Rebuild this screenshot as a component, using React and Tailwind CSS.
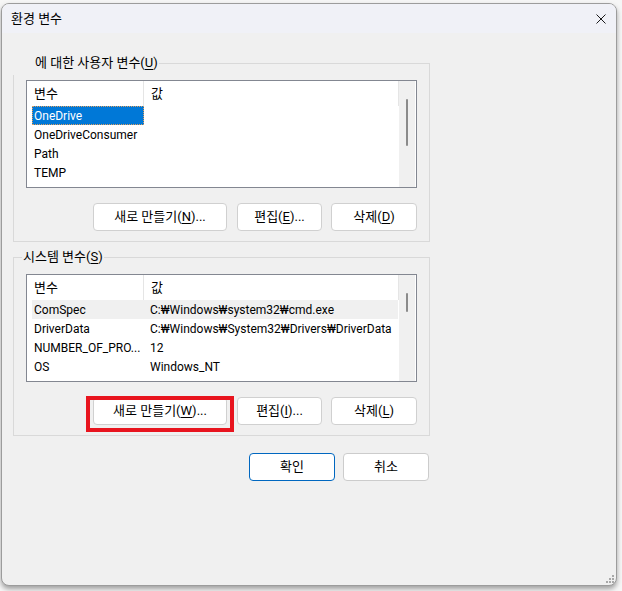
import React from 'react';

const font = "font-['Roboto','Noto_Sans_CJK_KR',sans-serif]";

const Key = ({ children }) => <span className="underline underline-offset-[2px] decoration-[1px]">{children}</span>;

const Button = ({ className = '', children }) => (
  <button type="button"
    className={`flex h-[28px] items-center justify-center rounded-[4px] border bg-white text-[13px] text-black ${className}`}>
    {children}
  </button>
);

const userRows = [
  { name: 'OneDrive', value: '', selected: true },
  { name: 'OneDriveConsumer', value: '' },
  { name: 'Path', value: '' },
  { name: 'TEMP', value: '' },
];

const systemRows = [
  { name: 'ComSpec', value: 'C:₩Windows₩system32₩cmd.exe', hover: true },
  { name: 'DriverData', value: 'C:₩Windows₩System32₩Drivers₩DriverData' },
  { name: 'NUMBER_OF_PRO...', value: '12' },
  { name: 'OS', value: 'Windows_NT' },
];

const VarList = ({ rows, thumb }) => (
  <div className="flex h-[108px] border border-[#838791] bg-white">
    <div className="w-[373px] overflow-hidden text-[12px]">
      {/* header */}
      <div className="flex h-[25px] w-[372px] text-[13px]">
        <div className="flex h-full w-[117px] items-center border-r border-[#e5e5e5] pl-[7px]">변수</div>
        <div className="flex h-full flex-1 items-center border-r border-[#e5e5e5] pl-[7px]">값</div>
      </div>
      {rows.map(row => (
        <div key={row.name}
          className={`ml-[5px] flex h-[19px] w-[366px] items-center whitespace-nowrap ${row.hover ? 'bg-[#f0f0f0]' : ''}`}>
          <div className={`flex h-full w-[112px] shrink-0 items-center overflow-hidden ${row.selected ? 'border border-dotted border-[#e0a060] bg-[#0078d7] pl-[1px] text-white' : 'pl-[2px]'}`}>
            {row.name}
          </div>
          <div className="pl-[6px]">{row.value}</div>
        </div>
      ))}
    </div>
    {/* scrollbar */}
    <div className="w-[16px] bg-[#f0f0f0] pt-[18px]">
      <div className={`ml-[7px] w-[2px] rounded-full bg-[#8b8b8b] ${thumb}`} />
    </div>
    <div className="w-[1px]" />
  </div>
);

export default function App() {
  return (
    <div className={`h-[591px] w-[622px] overflow-hidden bg-[#f6f6f6] pl-[1px] pt-[3px] text-[13px] text-black ${font}`}>
      <div className="relative flex h-[583px] w-[616px] flex-col overflow-hidden rounded-[8px] border border-[#9c9c9c] bg-[#f0f0f0] shadow-[0_3px_5px_rgba(0,0,0,0.35)]">
        {/* title bar */}
        <div className="flex h-[29px] shrink-0 items-center justify-between bg-[#f0f1f7] pl-[9px] pr-[9px]">
          <span className="text-[13px]">환경 변수</span>
          <svg width="10" height="10" viewBox="0 0 10 10" className="mr-[1px]">
            <path d="M0.5 0.5 L9.5 9.5 M9.5 0.5 L0.5 9.5" stroke="#1a1a1a" strokeWidth="1" fill="none" />
          </svg>
        </div>

        {/* body */}
        <div className="flex flex-col pl-[11px] pt-[30px]">
          {/* user variables */}
          <div className="relative w-[417px] border border-[#d9d9d9] px-[12px] pb-[10px] pt-[16px]">
            <span className="absolute left-[-1px] top-[-11px] h-[22px] bg-[#f0f0f0] pl-[22px] pr-[1px] leading-[20px]">
              에 대한 사용자 변수(<Key>U</Key>)
            </span>
            <VarList rows={userRows} thumb="h-[47px]" />
            <div className="mt-[15px] flex justify-end gap-[9px]">
              <Button className="mr-[1px] w-[134px] border-[#d0d0d0]">새로 만들기(<Key>N</Key>)...</Button>
              <Button className="w-[85px] border-[#d0d0d0]">편집(<Key>E</Key>)...</Button>
              <Button className="w-[86px] border-[#d0d0d0]">삭제(<Key>D</Key>)</Button>
            </div>
          </div>

          {/* system variables */}
          <div className="relative mt-[15px] w-[417px] border border-[#d9d9d9] px-[12px] pb-[10px] pt-[16px]">
            <span className="absolute left-[8px] top-[-11px] h-[20px] bg-[#f0f0f0] px-[1px] leading-[20px]">
              시스템 변수(<Key>S</Key>)
            </span>
            <VarList rows={systemRows} thumb="h-[19px]" />
            <div className="mt-[15px] flex justify-end gap-[9px]">
              <div className="relative mr-[1px]">
                <Button className="w-[134px] border-[#d0d0d0]">새로 만들기(<Key>W</Key>)...</Button>
                <span className="pointer-events-none absolute -bottom-[7px] -left-[7px] -right-[7px] -top-[1px] border-[4px] border-[#e8141e]" />
              </div>
              <Button className="w-[85px] border-[#d0d0d0]">편집(<Key>I</Key>)...</Button>
              <Button className="w-[86px] border-[#d0d0d0]">삭제(<Key>L</Key>)</Button>
            </div>
          </div>

          {/* dialog buttons */}
          <div className="mt-[17px] flex w-[417px] justify-end gap-[8px] pr-[1px]">
            <Button className="w-[86px] border-[#0067c0]">확인</Button>
            <Button className="w-[86px] border-[#cccccc]">취소</Button>
          </div>
        </div>

        {/* resize grip */}
        <svg width="8" height="8" viewBox="0 0 8 8" className="absolute bottom-[2px] right-[2px]">
          <g fill="#a8a8a8">
            <rect x="6" y="0" width="2" height="2" />
            <rect x="3" y="3" width="2" height="2" />
            <rect x="6" y="3" width="2" height="2" />
            <rect x="0" y="6" width="2" height="2" />
            <rect x="3" y="6" width="2" height="2" />
            <rect x="6" y="6" width="2" height="2" />
          </g>
        </svg>
      </div>
    </div>
  );
}
